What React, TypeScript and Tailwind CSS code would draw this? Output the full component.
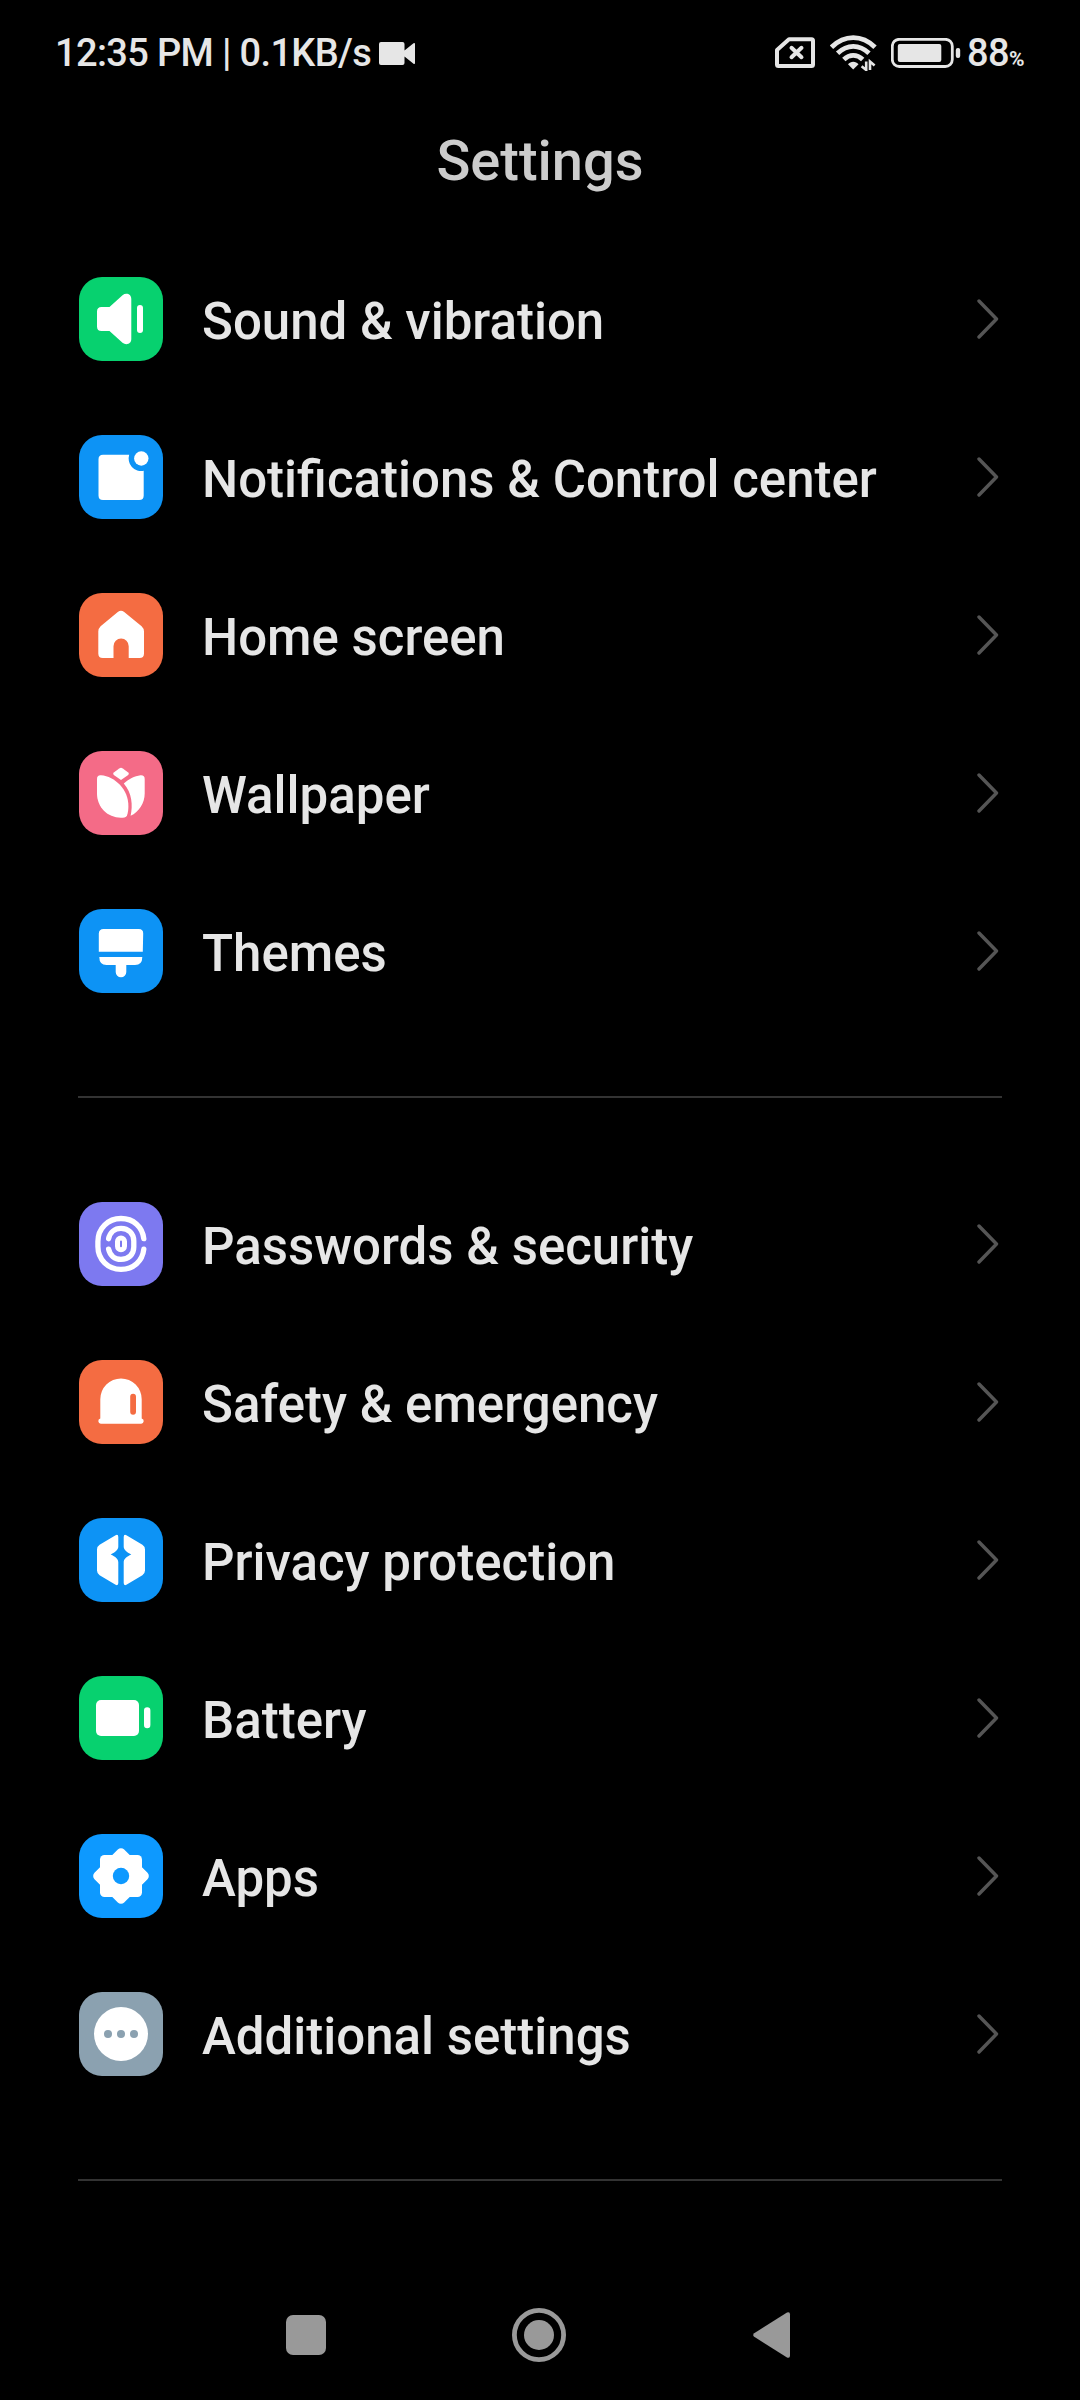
import type { ReactNode } from "react";

type Item = { label: string; bg: string; icon: ReactNode };

const soundIcon = (
  <>
    <path
      d="M22.5 30H30.5L43.5 18.2C47 15.5 52.3 16.8 52.3 22V62C52.3 67.2 47 68.5 43.5 65.8L30.5 54H22.5Q18 54 18 49.5V34.5Q18 30 22.5 30Z"
      fill="#fff"
    />
    <rect x="58" y="28" width="6" height="28" rx="3" fill="#fff" />
  </>
);

const notificationIcon = (
  <>
    <path
      d="M24 19.7H50.2A12.6 12.6 0 0 0 64.7 35.8V60.5Q64.7 65 60.2 65H24Q19.5 65 19.5 60.5V24.2Q19.5 19.7 24 19.7Z"
      fill="#fff"
    />
    <circle cx="62.3" cy="23.5" r="7.2" fill="#fff" />
  </>
);

const homeIcon = (
  <path
    d="M38.8 19Q42 16.6 45.2 19L62.6 33.2Q65 35.4 65 38.5V60.5Q65 65 60.5 65H49.7V53.2A7.6 7.6 0 0 0 34.5 53.2V65H23.8Q19.3 65 19.3 60.5V38.5Q19.3 35.4 21.6 33.2Z"
    fill="#fff"
  />
);

const wallpaperIcon = (
  <>
    <path d="M40.2 17.4Q42 16.2 43.8 17.4L49.2 21.6Q50.6 22.8 49.2 24L42 28.9L34.8 24Q33.4 22.8 34.8 21.6Z" fill="#fff" />
    <path
      d="M22 24.3C36 25.5 49.4 38.5 49.4 55C49.4 58.5 49 61.5 48 64.5Q47.4 66 45.5 66.4C30.5 68.5 18 57.5 18 42.5V28Q18 24 22 24.3Z"
      fill="#fff"
    />
    <path
      d="M44.8 32.4C49.5 28.4 55.5 25 61.5 24.3Q65.7 24 65.7 28V42.5C65.7 52 60 61 51.6 64.8C54 54 53 42 44.8 32.4Z"
      fill="#fff"
    />
  </>
);

const themesIcon = (
  <>
    <path d="M24.5 20H59.8Q64.3 20 64.2 24.5L63.8 42.7H19.8V24.5Q20 20 24.5 20Z" fill="#fff" />
    <path
      d="M20.3 48H63.3Q63.3 56 56 56H47.3V63A5.3 5.3 0 0 1 36.7 63V56H27.5Q20.3 56 20.3 48Z"
      fill="#fff"
    />
  </>
);

const fingerprintIcon = (
  <g fill="none" stroke="#fff" strokeWidth="5.3" strokeLinecap="round">
    <path d="M64.8 36.7C63.5 25 54.5 16.5 42 16.5C29 16.5 18.9 26.5 18.9 39.5V44.5C18.9 57.5 29 67.3 42 67.3C54.5 67.3 63.5 59 64.8 47.2" />
    <path d="M29.6 36.7C31 30.5 35.5 26.4 42 26.4C49.5 26.4 54.8 31.5 54.8 39V45C54.8 52.5 49.5 57.4 42 57.4C35.5 57.4 31 53.4 29.6 47.2" />
    <rect x="38.5" y="36" width="7" height="11.8" rx="3.5" strokeWidth="5" />
  </g>
);

const emergencyIcon = (
  <>
    <path
      d="M21.3 58.4V39.2A20.7 20.7 0 0 1 62.7 39.2V58.4A2.7 2.7 0 0 1 62.2 63.7H21.8A2.7 2.7 0 0 1 21.3 58.4Z"
      fill="#fff"
    />
    <rect x="51.2" y="33.7" width="5.8" height="21" rx="2.9" fill="#f46c42" />
  </>
);

const privacyIcon = (
  <g fill="#fff">
    <path d="M36.6 17.2Q39.3 16 39.3 19V28.5C39.3 31.8 36.5 34.2 31.7 36.4C36.5 38.6 39.3 41 39.3 44.3V65Q39.3 68 36.6 66.8L20.6 57.3Q18 55.6 18 52.6V31.4Q18 28.4 20.6 26.7Z" />
    <path d="M47.4 17.2Q44.7 16 44.7 19V28.5C44.7 31.8 47.5 34.2 52.3 36.4C47.5 38.6 44.7 41 44.7 44.3V65Q44.7 68 47.4 66.8L63.4 57.3Q66 55.6 66 52.6V31.4Q66 28.4 63.4 26.7Z" />
  </g>
);

const batteryIcon = (
  <g fill="#fff">
    <rect x="17" y="24" width="43" height="36" rx="5" />
    <rect x="65" y="31.3" width="6.4" height="21" rx="3.2" />
  </g>
);

const appsIcon = (
  <>
    <rect x="21" y="21" width="42" height="42" rx="4.5" fill="#fff" />
    <rect x="21" y="21" width="42" height="42" rx="4.5" fill="#fff" transform="rotate(45 42 42)" />
    <circle cx="42" cy="42" r="8.2" fill="#0d99ff" />
  </>
);

const moreIcon = (
  <>
    <circle cx="42" cy="42" r="27" fill="#fff" />
    <g fill="#8ba1b0">
      <circle cx="29" cy="42" r="4" />
      <circle cx="42" cy="42" r="4" />
      <circle cx="55" cy="42" r="4" />
    </g>
  </>
);

const personal: Item[] = [
  { label: "Sound & vibration", bg: "bg-[#07d16f]", icon: soundIcon },
  { label: "Notifications & Control center", bg: "bg-[#0d93f5]", icon: notificationIcon },
  { label: "Home screen", bg: "bg-[#f46c42]", icon: homeIcon },
  { label: "Wallpaper", bg: "bg-[#f46b87]", icon: wallpaperIcon },
  { label: "Themes", bg: "bg-[#0d93f5]", icon: themesIcon },
];

const system: Item[] = [
  { label: "Passwords & security", bg: "bg-[#7d79f0]", icon: fingerprintIcon },
  { label: "Safety & emergency", bg: "bg-[#f46c42]", icon: emergencyIcon },
  { label: "Privacy protection", bg: "bg-[#0d93f5]", icon: privacyIcon },
  { label: "Battery", bg: "bg-[#07d16f]", icon: batteryIcon },
  { label: "Apps", bg: "bg-[#0d99ff]", icon: appsIcon },
  { label: "Additional settings", bg: "bg-[#8ba1b0]", icon: moreIcon },
];

function Row({ label, bg, icon }: Item) {
  return (
    <li className="flex h-[158px] items-center pl-[79px] pr-[80px]">
      <span className={`size-[84px] shrink-0 overflow-hidden rounded-[23px] ${bg}`}>
        <svg viewBox="0 0 84 84" className="size-full">
          {icon}
        </svg>
      </span>
      <span className="ml-[39px] flex-1 whitespace-nowrap pt-1 text-[51px] font-medium leading-none text-[#e6e6e6]">
        {label}
      </span>
      <svg viewBox="0 0 24 40" className="h-10 w-6 shrink-0" fill="none">
        <path d="M3 2L20.5 20L3 38" stroke="#555" strokeWidth="3.4" strokeLinecap="round" strokeLinejoin="round" />
      </svg>
    </li>
  );
}

function StatusBar() {
  return (
    <header className="flex h-[106px] items-center justify-between pl-[55px] pr-[55px] font-medium leading-none text-[#e6e6e6]">
      <div className="flex items-center whitespace-nowrap">
        <span className="w-[324px] text-[38px] tracking-[-0.65px]">12:35 PM | 0.1KB/s</span>
        <svg viewBox="0 0 36 23" className="h-[23px] w-9" fill="#e6e6e6">
          <path d="M2 0H23.5Q25.5 0 25.5 2V8.5L34.5 1.2Q36 0.4 36 2V21Q36 22.6 34.5 21.8L25.5 14.5V21Q25.5 23 23.5 23H2Q0 23 0 21V2Q0 0 2 0Z" />
        </svg>
      </div>
      <div className="flex items-center">
        <svg viewBox="0 0 40 32" className="mr-[15px] h-8 w-10" fill="none" stroke="#e6e6e6" strokeLinejoin="round">
          <path d="M14 2.2H36.5Q38 2.2 38 3.7V27.5Q38 29 36.5 29H3.5Q2 29 2 27.5V13Z" strokeWidth="4" />
          <path d="M16.5 10.8L26.5 20.2M26.5 10.8L16.5 20.2" strokeWidth="4" strokeLinecap="round" />
        </svg>
        <svg viewBox="0 0 48 36" className="mr-[13px] h-9 w-12" fill="none" stroke="#e6e6e6">
          <path d="M1.5 12.2C14.5 -0.6 32 -0.6 45 12.2" strokeWidth="4.8" />
          <path d="M7.6 18.2C17.3 9 29.3 9 39 18.2" strokeWidth="4.8" />
          <path d="M13.8 24.4C19.5 19 27 19 32.7 24.4" strokeWidth="4.8" />
          <path d="M23.2 34.5L18 29.3C20.5 25.8 26 25.8 28.5 29.3Z" fill="#e6e6e6" stroke="none" />
          <path d="M36.2 26.5V35L31.6 31.2M40 35V26.5L44.6 30.4" strokeWidth="2.6" />
        </svg>
        <svg viewBox="0 0 70 30" className="mr-[6px] h-[30px] w-[70px]">
          <rect x="1.3" y="1.3" width="60" height="27.2" rx="7" fill="none" stroke="#e6e6e6" strokeWidth="2.8" />
          <rect x="6.8" y="6" width="43.5" height="18" rx="2" fill="#e6e6e6" />
          <rect x="64.8" y="10" width="4.4" height="10" rx="2" fill="#e6e6e6" />
        </svg>
        <span className="flex w-[58px] items-baseline text-[38px] tracking-[-0.65px]">
          88<span className="text-[21px] font-bold tracking-[-1px]">%</span>
        </span>
      </div>
    </header>
  );
}

function NavBar() {
  return (
    <nav className="mt-auto flex h-[130px] items-center justify-between pl-[286px] pr-[289px]">
      <span className="h-10 w-[40px] rounded-[7px] bg-[#999]" />
      <svg viewBox="0 0 54 54" className="mr-px size-[54px]">
        <circle cx="27" cy="27" r="24.6" fill="none" stroke="#999" strokeWidth="4.8" />
        <circle cx="27" cy="27" r="15" fill="#999" />
      </svg>
      <svg viewBox="0 0 38 46" className="h-[46px] w-[38px]" fill="#999">
        <path d="M1.2 21.2L34 0.6Q37 -0.6 37 2.5V43.5Q37 46.6 34 45.4L1.2 24.8Q-0.8 23 1.2 21.2Z" />
      </svg>
    </nav>
  );
}

export default function App() {
  return (
    <div className="flex h-[2400px] w-[1080px] flex-col overflow-hidden bg-black font-['Roboto',sans-serif]">
      <StatusBar />
      <h1 className="flex h-[134px] items-start justify-center pt-[27px] text-[56px] font-medium leading-[56px] text-[#ccc]">
        Settings
      </h1>
      <ul>
        {personal.map((item) => (
          <Row key={item.label} {...item} />
        ))}
      </ul>
      <hr className="mx-[78px] mb-[67px] mt-[66px] h-0.5 border-0 bg-[#333]" />
      <ul>
        {system.map((item) => (
          <Row key={item.label} {...item} />
        ))}
      </ul>
      <hr className="mx-[78px] mt-[66px] h-0.5 border-0 bg-[#333]" />
      <NavBar />
    </div>
  );
}
